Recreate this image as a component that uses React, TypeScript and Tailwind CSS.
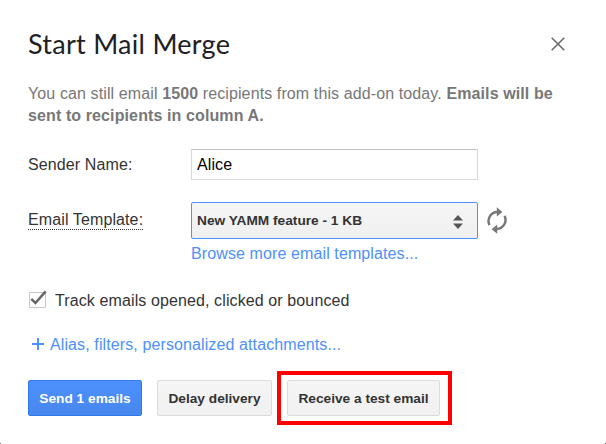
import type { ReactNode } from 'react';

type ActionButtonProps = {
  className: string;
  children: ReactNode;
};

function ActionButton({ className, children }: ActionButtonProps) {
  return (
    <button
      type="button"
      className={`h-9 whitespace-nowrap rounded-[2px] border pt-px text-[13.7px] font-bold tracking-normal ${className}`}
    >
      {children}
    </button>
  );
}

function CloseIcon() {
  return (
    <svg className="h-[14px] w-[14px]" viewBox="0 0 14 14" fill="none" stroke="#6b6c6f" strokeWidth="1.6" aria-hidden>
      <path d="M0.7 0.7 13.3 13.3M13.3 0.7 0.7 13.3" />
    </svg>
  );
}

function RefreshIcon() {
  return (
    <svg className="h-[28px] w-[22px]" viewBox="0 0 22 28" aria-hidden>
      <g fill="none" stroke="#777" strokeWidth="2.4">
        <path d="M3.5 18.1A9 9 0 0 1 11.6 5" />
        <path d="M18.5 8.9A9 9 0 0 1 10.4 22" />
      </g>
      <path fill="#777" d="M10.8 0.3 16.4 4.9 10.8 9.4ZM11.2 17.6 5.6 22.2 11.2 26.8Z" />
    </svg>
  );
}

function SortArrows() {
  return (
    <svg className="h-[14px] w-[10px]" viewBox="0 0 10 14" fill="#555" aria-hidden>
      <path d="M0 5.5 5 0 10 5.5ZM0 8.5H10L5 14Z" />
    </svg>
  );
}

const grayButton = 'border-[#dcdcdc] bg-linear-to-b from-[#f5f5f5] to-[#f1f1f1] text-[#333]';

export default function App() {
  return (
    <main className="relative h-[444px] w-[606px] overflow-hidden bg-white pl-7 font-['Liberation_Sans',Arial,sans-serif] text-base leading-[22px] tracking-[0.11px] text-[#333]">
      <header className="flex h-[83px] items-start justify-between pr-[41px]">
        <h1 className="mt-[26px] font-['Lato',sans-serif] text-[27px] leading-9 tracking-[0.27px] text-[#202124]">Start Mail Merge</h1>
        <button type="button" aria-label="Close" className="mt-[37px]">
          <CloseIcon />
        </button>
      </header>

      <p className="w-[550px] text-[#777]">
        You can still email <b>1500</b> recipients from this add-on today. <b>Emails will be<br />sent to recipients in column A.</b>
      </p>

      <div className="mt-[22px] flex h-[31px] items-center">
        <label htmlFor="sender" className="w-[163px]">Sender Name:</label>
        <input
          id="sender"
          defaultValue="Alice"
          className="h-[31px] w-[287px] border border-[#d9d9d9] border-t-[#c0c0c0] px-[5px] text-black outline-none"
        />
      </div>

      <div className="mt-[22px] flex h-[37px] items-center">
        <div className="w-[163px]">
          <span className="mb-[3px] inline-block h-[19px] border-b border-dotted border-[#333] leading-[18px]">Email Template:</span>
        </div>
        <button
          type="button"
          className="flex h-[37px] w-[287px] items-center justify-between rounded-[2px] border border-[#4d90fe] bg-linear-to-b from-[#f5f5f5] to-[#f0f0f0] pl-[5px] pr-[14px] text-[13.7px] font-bold tracking-normal"
        >
          New YAMM feature - 1 KB
          <span className="mt-[3px]"><SortArrows /></span>
        </button>
        <button type="button" aria-label="Refresh templates" className="ml-2">
          <RefreshIcon />
        </button>
      </div>
      <a className="ml-[163px] mt-1 block text-[#4d90fe]">Browse more email templates...</a>

      <label className="mt-[25px] flex h-[22px] items-center">
        <svg className="mb-[3px] h-[20px] w-[27px]" viewBox="0 0 27 20" fill="none" aria-hidden>
          <path d="M1.5 2.5h16v15h-16z" stroke="#c6c6c6" />
          <path d="M3.3 8.8 7.4 13 17.7 1.4" stroke="#666" strokeWidth="2.4" />
        </svg>
        Track emails opened, clicked or bounced
      </label>

      <a className="mt-[22px] flex h-[22px] items-center text-[#4d90fe]">
        <svg className="mb-[3px] ml-1 mr-[6px] h-3 w-3" viewBox="0 0 12 12" stroke="#4d90fe" strokeWidth="2" aria-hidden>
          <path d="M6 0v12M0 6h12" />
        </svg>
        Alias, filters, personalized attachments...
      </a>

      <div className="mt-[15px] flex items-center">
        <ActionButton className="w-[114px] border-[#3079ed] bg-linear-to-b from-[#4d90fe] to-[#4787ed] text-white">
          Send 1 emails
        </ActionButton>
        <ActionButton className={`ml-[15px] w-[115px] ${grayButton}`}>Delay delivery</ActionButton>
        <div className="ml-[5px] flex h-[54px] w-[175px] items-center border-4 border-[#f00] pl-[6px]">
          <ActionButton className={`w-[153px] ${grayButton}`}>Receive a test email</ActionButton>
        </div>
      </div>

      {/* rounded dialog corners */}
      <span className="absolute bottom-0 left-0 h-px w-px bg-[#777]" />
      <span className="absolute bottom-0 right-0 h-px w-px bg-[#777]" />
    </main>
  );
}
